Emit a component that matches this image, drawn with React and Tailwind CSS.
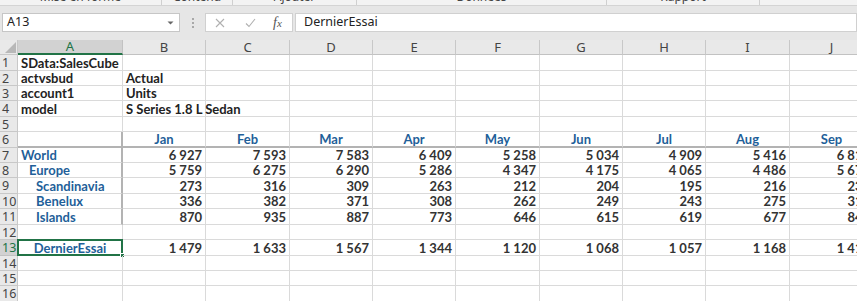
import React from "react";

const COLS = [
  { l: "A", w: "w-[105px]" },
  { l: "B", w: "w-[83px]" },
  { l: "C", w: "w-[84px]" },
  { l: "D", w: "w-[83px]" },
  { l: "E", w: "w-[83px]" },
  { l: "F", w: "w-[84px]" },
  { l: "G", w: "w-[83px]" },
  { l: "H", w: "w-[83px]" },
  { l: "I", w: "w-[84px]" },
  { l: "J", w: "w-[84px]" },
];

const H = ["h-[16px]", "h-[15px]", "h-[15px]", "h-[16px]", "h-[15px]", "h-[16px]", "h-[15px]", "h-[15px]", "h-[16px]", "h-[15px]", "h-[16px]", "h-[15px]", "h-[16px]", "h-[15px]", "h-[15px]", "h-[16px]"];

const months = ["Jan", "Feb", "Mar", "Apr", "May", "Jun", "Jul", "Aug", "Sep"];

const data = {
  7: { label: "World", pad: "pl-[3px]", v: ["6 927", "7 593", "7 583", "6 409", "5 258", "5 034", "4 909", "5 416", "6 812"] },
  8: { label: "Europe", pad: "pl-[11px]", v: ["5 759", "6 275", "6 290", "5 286", "4 347", "4 175", "4 065", "4 486", "5 671"] },
  9: { label: "Scandinavia", pad: "pl-[18px]", v: ["273", "316", "309", "263", "212", "204", "195", "216", "231"] },
  10: { label: "Benelux", pad: "pl-[18px]", v: ["336", "382", "371", "308", "262", "249", "243", "275", "318"] },
  11: { label: "Islands", pad: "pl-[18px]", v: ["870", "935", "887", "773", "646", "615", "619", "677", "842"] },
  13: { label: "DernierEssai", center: true, v: ["1 479", "1 633", "1 567", "1 344", "1 120", "1 068", "1 057", "1 168", "1 412"] },
};

const top = {
  1: ["SData:SalesCube", ""],
  2: ["actvsbud", "Actual"],
  3: ["account1", "Units"],
  4: ["model", "S Series 1.8 L Sedan"],
};

const groups = [
  { t: "Mise en forme", w: "w-[162px]" },
  { t: "Contenu", w: "w-[71px]" },
  { t: "Ajouter", w: "w-[124px]" },
  { t: "Données", w: "w-[250px]" },
  { t: "Rapport", w: "w-[153px]" },
];

function Cell({ col, ci, r, children, align = "left" }) {
  let border = "border-r border-b border-[#dadada]";
  if (r === 6) border = "border-r border-r-[#dadada] border-b-2 border-b-[#b3b3b3]";
  if (ci === 0 && r >= 6 && r <= 11) {
    border = r === 6 ? "border-r-2 border-r-[#b3b3b3] border-b-2 border-b-[#b3b3b3]" : "border-r-2 border-r-[#b3b3b3] border-b border-b-[#dadada]";
  }
  const al = align === "right" ? "justify-end pr-[3px]" : align === "center" ? "justify-center" : "justify-start";
  return (
    <div className={`relative shrink-0 ${col.w} h-full ${border} flex items-center ${al} overflow-visible whitespace-nowrap leading-[14px]`}>
      {children}
    </div>
  );
}

function Row({ r }) {
  const sel = r === 13;
  return (
    <div className={`flex ${H[r - 1]}`}>
      <div className={`shrink-0 w-[18px] h-full border-r border-b ${sel ? "bg-[#d2d2d2] text-[#217346] border-b-[#c2c2c2] border-r-[#217346]" : "bg-[#e9e9e9] text-[#444] border-[#c8c8c8]"} flex items-center pl-[2px] text-[12.5px] font-['Noto_Sans',sans-serif] leading-[13px] overflow-hidden`}>
        {r}
      </div>
      {COLS.map((c, ci) => {
        let content = null;
        let align = "left";
        if (top[r]) {
          const t = top[r][ci];
          if (t) content = <span className="pl-[3px] text-[#222] font-bold">{t}</span>;
        } else if (r === 6) {
          if (ci > 0) {
            content = <span className="text-[#1f5f99] font-bold">{months[ci - 1]}</span>;
            align = "center";
          }
        } else if (data[r]) {
          const d = data[r];
          if (ci === 0) {
            if (d.center) {
              align = "center";
              content = <span className="text-[#1f5f99] font-bold">{d.label}</span>;
            } else {
              content = <span className={`${d.pad} text-[#1f5f99] font-bold`}>{d.label}</span>;
            }
          } else {
            align = "right";
            content = <span className="text-[#333] font-bold">{d.v[ci - 1]}</span>;
          }
        }
        return (
          <Cell key={ci} col={c} ci={ci} r={r} align={align}>
            {content}
            {sel && ci === 0 && (
              <>
                <div className="absolute left-[-1px] top-[-1px] right-[-1px] bottom-[-1px] border-2 border-[#217346] pointer-events-none" />
                <div className="absolute right-[-3px] bottom-[-3px] w-[5px] h-[5px] bg-[#217346] border border-white" />
              </>
            )}
          </Cell>
        );
      })}
    </div>
  );
}

export default function App() {
  return (
    <div className="w-[857px] h-[301px] overflow-hidden bg-white font-['Lato',sans-serif] text-[13px]">
      {/* ribbon group labels strip */}
      <div className="flex h-[6px] bg-[#f3f3f3] border-b border-[#d4d4d4] overflow-hidden">
        {groups.map((g) => (
          <div key={g.t} className={`${g.w} shrink-0 h-full border-r border-[#d0d0d0] flex justify-center`}>
            <span className="mt-[-10px] text-[12px] leading-[14px] text-[#444] font-['Noto_Sans',sans-serif]">{g.t}</span>
          </div>
        ))}
        <div className="flex-1" />
      </div>
      {/* formula bar */}
      <div className="h-[34px] bg-[#e6e6e6] flex items-start pt-[7px]">
        <div className="ml-[2px] w-[178px] h-[19px] bg-white border border-[#c6c6c6] flex items-center justify-between pl-[4px] pr-[5px]">
          <span className="text-[12.5px] text-[#222] font-['Noto_Sans',sans-serif] leading-none">A13</span>
          <svg width="7" height="4" viewBox="0 0 7 4"><path d="M0.5 0.5 L3.5 3.5 L6.5 0.5 Z" fill="#666" /></svg>
        </div>
        <div className="w-[25px] h-[19px] flex flex-col items-center justify-center gap-[2px]">
          <div className="w-[2px] h-[2px] bg-[#a8a8a8]" />
          <div className="w-[2px] h-[2px] bg-[#a8a8a8]" />
          <div className="w-[2px] h-[2px] bg-[#a8a8a8]" />
        </div>
        <div className="w-[88px] h-[19px] bg-white border border-[#d0d0d0] flex items-center">
          <svg className="ml-[9px]" width="10" height="10" viewBox="0 0 10 10"><path d="M1 1 L9 9 M9 1 L1 9" stroke="#b0b0b0" strokeWidth="1.1" fill="none" /></svg>
          <svg className="ml-[20px]" width="11" height="10" viewBox="0 0 11 10"><path d="M1 5.5 L4 8.5 L10 1" stroke="#b0b0b0" strokeWidth="1.1" fill="none" /></svg>
          <span className="ml-[17px] text-[14px] italic text-[#555] font-['Liberation_Serif',serif] leading-none">f<span className="text-[11px]">x</span></span>
        </div>
        <div className="ml-[2px] flex-1 h-[19px] bg-white border border-[#d0d0d0] flex items-center pl-[8px]">
          <span className="text-[12.5px] text-[#222] font-['Noto_Sans',sans-serif] leading-none">DernierEssai</span>
        </div>
      </div>
      {/* column headers */}
      <div className="flex h-[15px]">
        <div className="relative shrink-0 w-[18px] h-full bg-[#e9e9e9] border-r border-b border-[#c8c8c8]">
          <svg className="absolute right-[1px] bottom-[1px]" width="11" height="11" viewBox="0 0 11 11"><path d="M11 0 L11 11 L0 11 Z" fill="#b8b8b8" /></svg>
        </div>
        {COLS.map((c, ci) => (
          <div
            key={c.l}
            className={`shrink-0 ${c.w} h-full border-r flex items-center justify-center text-[13px] leading-none font-['Noto_Sans',sans-serif] ${ci === 0 ? "bg-[#d2d2d2] text-[#217346] border-b-2 border-b-[#217346] border-r-[#c2c2c2]" : "bg-[#e9e9e9] text-[#444] border-b border-b-[#c2c2c2] border-r-[#c8c8c8]"}`}
          >
            {c.l}
          </div>
        ))}
      </div>
      {/* rows */}
      {Array.from({ length: 16 }, (_, i) => (
        <Row key={i} r={i + 1} />
      ))}
    </div>
  );
}
